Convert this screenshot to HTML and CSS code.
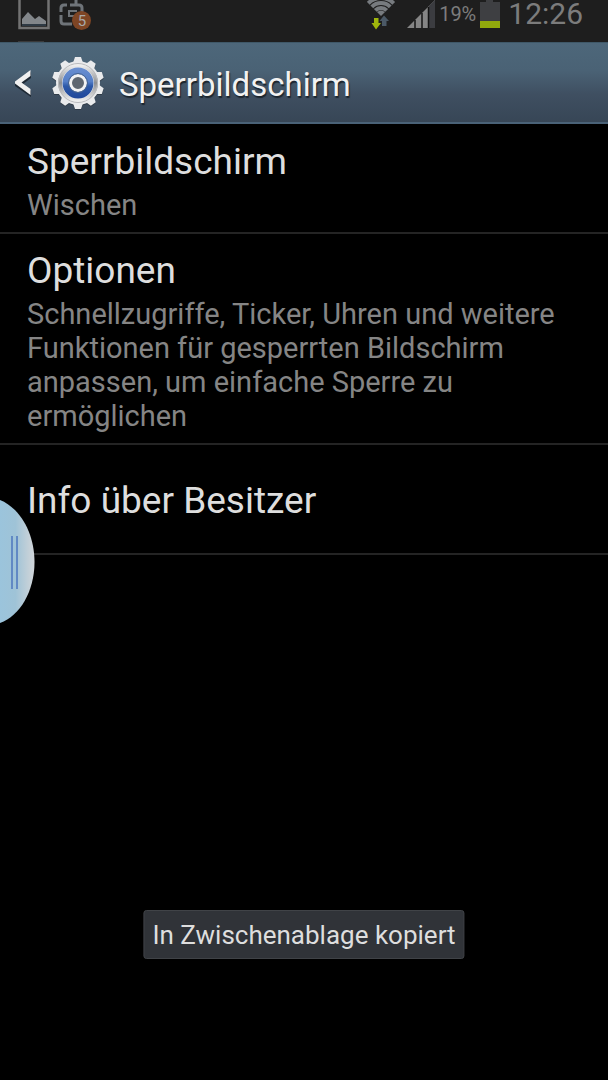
FILE: index.html
```html
<!DOCTYPE html>
<html lang="de">
<head>
<meta charset="utf-8">
<meta name="viewport" content="width=device-width, initial-scale=1">
<title>Sperrbildschirm</title>
<link rel="stylesheet" href="styles.css">
</head>
<body>
<div class="screen">
  <div class="status">
    <svg class="status-icon" width="32" height="42" viewBox="0 0 32 42" aria-hidden="true">
      <path d="M1.500 -2V28H30.500V-2" fill="none" stroke="#737373" stroke-width="2.500"/>
      <path d="M4 24V19L10 12L17 19L21 16L28 21V24Z" fill="#82868a"/>
      <path d="M4 25H28" stroke="#40566a"/>
      <path d="M0 41.500H26" stroke="#3a3a3a"/>
    </svg>
    <svg class="status-icon" width="34" height="42" viewBox="0 0 34 42" aria-hidden="true">
      <g fill="none" stroke="#6f7479" stroke-width="3">
        <path d="M9 5H6Q3 5 3 8V12M3 15V21Q3 24 6 24H14M12 5H21Q24 5 24 8V12M18 0V5"/>
        <path d="M19 11H11V16H18" stroke-width="2"/>
      </g>
      <circle cx="23.500" cy="20.500" r="9.500" fill="#7e4524"/>
      <text class="badge-text" x="24" y="26" text-anchor="middle">5</text>
    </svg>
    <span class="grow"></span>
    <svg class="wifi" width="30" height="42" viewBox="0 0 30 42" aria-hidden="true">
      <g fill="none" stroke="#777b7f" stroke-width="4">
        <path d="M1.300 3.300A18 18 0 0 1 26.700 3.300M4.800 6.800A13 13 0 0 1 23.200 6.800M8.300 10.300A8 8 0 0 1 19.700 10.300"/>
      </g>
      <path d="M10 12Q14 9 18 12L14 16Z" fill="#777b7f"/>
      <path d="M7 18H11.500V23H14L9 29.500L4.500 23H7Z" fill="#9fb60c"/>
      <path d="M15 26V21H12.500L17 15.500L22 21H19.500V26Z" fill="#4b5966"/>
    </svg>
    <svg class="signal" width="28" height="42" viewBox="0 0 28 42" aria-hidden="true">
      <path d="M0 28L28 0V28Z" fill="#858585"/>
      <path d="M22 28V6L28 0V28Z" fill="#3b3c40"/>
      <path d="M8 28V20M15 28V13M21.500 28V7" fill="none" stroke="#131313" stroke-width="1.500"/>
    </svg>
    <span class="percent">19%</span>
    <svg class="battery" width="20" height="42" viewBox="0 0 20 42" aria-hidden="true">
      <path d="M6 0H13V2H20V22H0V2H6Z" fill="#3e3f42"/>
      <path d="M0 21H20V28H0Z" fill="#91a90d"/>
    </svg>
    <time class="clock">12:26</time>
  </div>

  <header class="bar">
    <button class="back" aria-label="Zurück">
      <svg width="18" height="28" viewBox="0 0 18 28" aria-hidden="true">
        <path d="M17 3V9L9 15L17 22V28L1 17V15Z" fill="#1e2934"/>
        <path d="M16.500 1V7L7.500 13.500L16.500 20V26L1 14.500V12.500Z" fill="#f0f0f0"/>
      </svg>
    </button>
    <svg class="gear" width="54" height="56" viewBox="-27 -28 54 56" aria-hidden="true">
      <defs>
        <path id="tooth" d="M-5 -20L-3 -26H3L5 -20Z"/>
        <g id="cog">
          <circle r="22"/>
          <use href="#tooth"/>
          <use href="#tooth" transform="rotate(36)"/>
          <use href="#tooth" transform="rotate(72)"/>
          <use href="#tooth" transform="rotate(108)"/>
          <use href="#tooth" transform="rotate(144)"/>
          <use href="#tooth" transform="rotate(180)"/>
          <use href="#tooth" transform="rotate(216)"/>
          <use href="#tooth" transform="rotate(252)"/>
          <use href="#tooth" transform="rotate(288)"/>
          <use href="#tooth" transform="rotate(324)"/>
        </g>
        <linearGradient id="blue" x1="0" y1="0" x2="0" y2="1">
          <stop offset="0" stop-color="#6a8fd0"/>
          <stop offset=".45" stop-color="#557fc8"/>
          <stop offset=".6" stop-color="#2d59a9"/>
          <stop offset="1" stop-color="#20479a"/>
        </linearGradient>
        <linearGradient id="ring" x1="0" y1="0" x2="0" y2="1">
          <stop offset="0" stop-color="#f0f0f0"/>
          <stop offset=".5" stop-color="#8d8f92"/>
          <stop offset="1" stop-color="#f0f0f0"/>
        </linearGradient>
      </defs>
      <use href="#cog" y="1" fill="#303b47"/>
      <use href="#cog" fill="#e9eaec"/>
      <circle r="18" fill="none" stroke="url(#ring)" stroke-width="4"/>
      <circle r="19.500" fill="none" stroke="#b9babd"/>
      <circle r="15.500" fill="url(#blue)"/>
      <circle r="7.500" fill="#5e6670" stroke="#f2f2f2" stroke-width="3"/>
      <circle r="9.500" fill="none" stroke="#47648f"/>
    </svg>
    <h1 class="title">Sperrbildschirm</h1>
  </header>

  <main class="list">
    <button class="row">
      <span class="name">Sperrbildschirm</span>
      <span class="summary">Wischen</span>
    </button>
    <button class="row">
      <span class="name">Optionen</span>
      <span class="summary">Schnellzugriffe, Ticker, Uhren und weitere Funktionen für gesperrten Bildschirm anpassen, um einfache Sperre zu ermöglichen</span>
    </button>
    <button class="row">
      <span class="name">Info über Besitzer</span>
    </button>
  </main>

  <button class="handle" aria-label="Seitenleiste öffnen">
    <svg width="35" height="126" viewBox="0 0 35 126" aria-hidden="true">
      <defs>
        <linearGradient id="pane" x1="0" y1="0" x2="1" y2="0">
          <stop offset="0" stop-color="#9bc4dc"/>
          <stop offset=".45" stop-color="#9fc3d7"/>
          <stop offset=".8" stop-color="#c0cfd8"/>
          <stop offset="1" stop-color="#d2d6da"/>
        </linearGradient>
      </defs>
      <path d="M0 1C20 9 34.500 34 34.500 63S20 117 0 124Z" fill="url(#pane)"/>
      <path d="M12 37V90M17 37V90" stroke="#6189c4" stroke-width="2"/>
    </svg>
  </button>
  <div class="toast" role="status">In Zwischenablage kopiert</div>
</div>
</body>
</html>
```

FILE: styles.css
```css
* {
  box-sizing: border-box;
}

body {
  margin: 0;
  background: #000;
  color: #dedede;
  font-family: Roboto, "Noto Sans", sans-serif;
}

button {
  margin: 0;
  padding: 0;
  border: 0;
  background: none;
  color: inherit;
  font: inherit;
  text-align: left;
}

svg {
  display: block;
  flex: none;
}

.screen {
  position: relative;
  min-height: 100vh;
  overflow: hidden;
}

.status {
  display: flex;
  height: 42px;
  padding: 0 25px 0 18px;
  background: #1e1e1e;
  color: #7c7c7c;
}

.status-icon {
  margin-right: 8px;
}

.badge-text {
  fill: #a8a8a8;
  font-size: 15px;
}

.grow {
  flex: 1;
}

.wifi {
  margin-right: 10px;
}

.percent {
  margin: 0 4px;
  font-size: 20px;
  line-height: 28px;
}

.clock {
  margin-left: 8px;
  font-size: 30px;
  line-height: 28px;
}

.bar {
  display: flex;
  align-items: center;
  height: 82px;
  padding: 0 14px;
  border-top: 1px solid #3f5868;
  border-bottom: 2px solid #4a6277;
  background: linear-gradient(#4d677a, #4a6275 35%, #3f4f61 65%, #374656);
}

.back {
  margin-right: 19px;
}

.title {
  margin: 0 0 0 14px;
  padding-top: 4px;
  color: #f2f2f2;
  font-size: 33px;
  font-weight: 400;
  line-height: 40px;
  text-shadow: 1px 2px 1px #1c252e;
}

.row {
  display: flex;
  flex-direction: column;
  justify-content: center;
  gap: 2px;
  width: 100%;
  min-height: 110px;
  padding: 12px 27px 10px;
  border-bottom: 2px solid #242424;
}

.name {
  font-size: 37px;
  line-height: 49px;
}

.summary {
  color: #858585;
  font-size: 29px;
  line-height: 34px;
}

.handle {
  position: absolute;
  top: 499px;
  left: 0;
}

.toast {
  position: absolute;
  bottom: 121px;
  left: 50%;
  transform: translateX(-50%);
  padding: 8px 8px 7px;
  border: 1px solid #404347;
  border-radius: 3px;
  background: #303338;
  font-size: 26px;
  line-height: 32px;
  white-space: nowrap;
}
```
